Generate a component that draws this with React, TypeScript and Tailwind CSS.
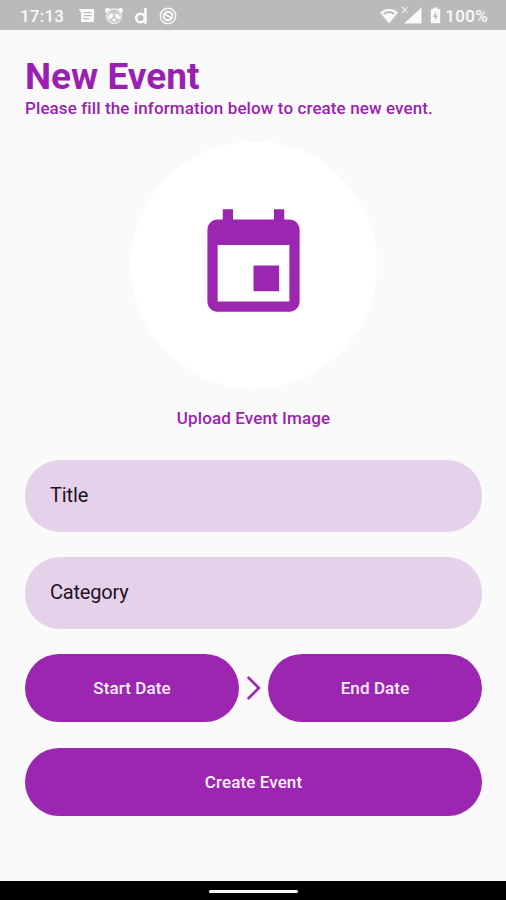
function StatusBar() {
  return (
    <header className="flex h-[30px] shrink-0 items-center justify-between bg-[#bababa] pl-[20px] pr-[18px] pt-px text-[#fafafa]">
      <div className="flex items-center">
        <span className="w-[58px] text-[17px] font-medium leading-[30px] tracking-[0.2px]">17:13</span>
        <svg width="17" height="16" viewBox="0 0 17 16" className="mt-px">
          <path fill="currentColor" fillRule="evenodd" d="M.5 1H15a1 1 0 0 1 1 1v11a1 1 0 0 1-1 1H4a1 1 0 0 1-1-1V4.500ZM5.500 4v1.300h8V4ZM5.500 7v1.300h8V7ZM5.500 10v1.300H11V10Z" />
        </svg>
        <svg width="20" height="18" viewBox="0 0 20 18" className="ml-[9px]">
          <g fill="currentColor">
            <circle cx="3.700" cy="3.500" r="2.600" />
            <circle cx="16.300" cy="3.500" r="2.600" />
          </g>
          <circle cx="10" cy="9.200" r="7.400" fill="#cbcbcb" stroke="#efefef" strokeWidth="1.200" />
          <g fill="#fafafa">
            <ellipse cx="6.500" cy="9.300" rx="2" ry="3" transform="rotate(35 6.500 9.300)" />
            <ellipse cx="13.500" cy="9.300" rx="2" ry="3" transform="rotate(-35 13.500 9.300)" />
            <ellipse cx="10" cy="13" rx="1.700" ry="1.200" />
          </g>
        </svg>
        <svg width="14" height="18" viewBox="0 0 14 18" className="ml-[10px]">
          <g fill="none" stroke="currentColor" strokeWidth="2.600">
            <circle cx="6.500" cy="11" r="4.300" />
            <path d="M11.400 1v15.700" />
          </g>
        </svg>
        <svg width="18" height="18" viewBox="0 0 18 18" className="ml-[11px]">
          <g fill="none" stroke="currentColor">
            <circle cx="9" cy="9" r="7.700" strokeWidth="1.500" />
            <circle cx="9" cy="9" r="4.300" strokeWidth="1.900" />
            <path strokeWidth="1.900" d="m6 7 6 4" />
          </g>
        </svg>
      </div>
      <div className="flex items-center">
        <svg width="20" height="16" viewBox="0 0 20 16">
          <path fill="currentColor" fillRule="evenodd" d="M10 15.500.8 4.300Q10-2.700 19.200 4.300ZM4 5.200l1.200 1.500Q10 3.300 14.800 6.700L16 5.200Q10 1 4 5.200Z" />
        </svg>
        <svg width="22" height="19" viewBox="0 0 22 19" className="ml-[2px]">
          <path fill="currentColor" d="M20.500 1.500v16H3Z" />
          <path fill="none" stroke="currentColor" strokeWidth="1.100" d="m1 1 5.500 6M6.500 1 1 7" />
        </svg>
        <svg width="11" height="17" viewBox="0 0 11 17" className="ml-[7px]">
          <path fill="currentColor" fillRule="evenodd" d="M3.500.5h4V2h1.700a1 1 0 0 1 1 1v12.300a1 1 0 0 1-1 1H1.800a1 1 0 0 1-1-1V3a1 1 0 0 1 1-1h1.700ZM6 4.800 3 10h2v3.700L8 8.500H6Z" />
        </svg>
        <span className="ml-[4px] text-[17px] font-medium leading-[30px] tracking-[0.3px]">100%</span>
      </div>
    </header>
  );
}

function Field({ label, spacing }: { label: string; spacing: string }) {
  return (
    <div className={`flex h-[72px] items-center rounded-[35px] bg-[#e6d1ea] px-[25px] pb-[2px] text-[20px] text-[#1d141f] ${spacing}`}>
      {label}
    </div>
  );
}

function PillButton({ label }: { label: string }) {
  return (
    <button className="flex h-[68.5px] flex-1 items-center justify-center rounded-[34px] bg-[#9b27b0] pt-px text-[17px] font-medium tracking-[0.1px] text-[#fbf0fc]">
      {label}
    </button>
  );
}

export default function App() {
  return (
    <div className="flex h-[900px] w-[506px] flex-col overflow-hidden bg-[#fafafa] font-[Roboto,sans-serif]">
      <StatusBar />
      <main className="flex flex-1 flex-col pl-[25px] pr-[24px] pt-[25px] text-[#9b1fb0]">
        <h1 className="h-[43px] text-[37px] font-bold leading-[43px]">New Event</h1>
        <p className="h-[20px] text-[17px] font-medium leading-[20px] tracking-[0.1px]">
          Please fill the information below to create new event.
        </p>
        <div className="mt-[24px] flex size-[246px] items-center justify-center self-center rounded-full bg-white">
          <svg width="123" height="123" viewBox="0 0 24 24" fill="#9b27b0">
            <path d="M17 12h-5v5h5v-5zM16 1v2H8V1H6v2H5c-1.110 0-1.990.9-1.990 2L3 19c0 1.100.89 2 2 2h14c1.100 0 2-.9 2-2V5c0-1.100-.9-2-2-2h-1V1h-2zm3 18H5V8h14v11z" />
          </svg>
        </div>
        <p className="mt-[20px] h-[20px] text-center text-[17px] font-medium leading-[20px] tracking-[0.11px]">
          Upload Event Image
        </p>
        <div className="mt-[31.5px] flex flex-col gap-[25.2px]">
          <Field label="Title" spacing="tracking-[-0.1px]" />
          <Field label="Category" spacing="tracking-[-0.2px]" />
          <div className="flex items-center">
            <PillButton label="Start Date" />
            <svg width="29" height="28" viewBox="0 0 29 28" fill="none" stroke="#9b27b0" strokeWidth="2.600">
              <path d="m8.800 3 11 11-11 11" />
            </svg>
            <PillButton label="End Date" />
          </div>
          <div className="flex">
            <PillButton label="Create Event" />
          </div>
        </div>
      </main>
      <footer className="flex h-[19px] shrink-0 items-center justify-center bg-black">
        <div className="mt-[2px] h-[3px] w-[89px] rounded-full bg-white" />
      </footer>
    </div>
  );
}
